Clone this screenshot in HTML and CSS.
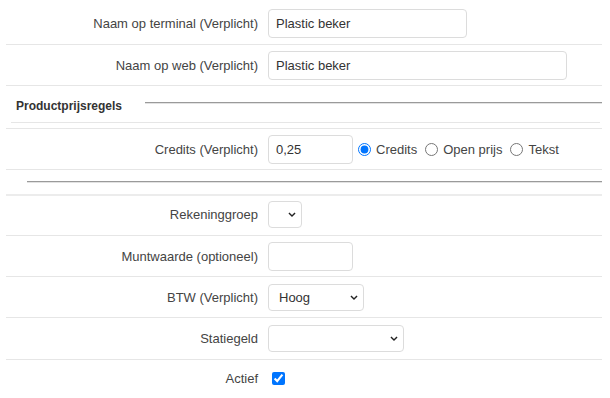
FILE: index.html
```html
<!DOCTYPE html>
<html lang="nl">
<head>
  <meta charset="UTF-8" />
  <meta name="viewport" content="width=device-width, initial-scale=1.0" />
  <title>Product bewerken</title>
  <link rel="stylesheet" href="styles.css">
</head>
<body>

  <div class="form">
    <!-- Namen -->
    <div class="row first">
      <label class="label">Naam op terminal (Verplicht)</label>
      <div class="field"><input class="text w-terminal" type="text" value="Plastic beker" /></div>
    </div>
    <div class="row">
      <label class="label">Naam op web (Verplicht)</label>
      <div class="field"><input class="text w-web" type="text" value="Plastic beker" /></div>
    </div>

    <!-- Prijsregels -->
    <div class="section">
      <div class="section-head">
        <span>Productprijsregels</span>
        <hr />
      </div>
    </div>
    <div class="row">
      <label class="label">Credits (Verplicht)</label>
      <div class="field">
        <input class="text w-small" type="text" value="0,25" />
        <div class="options">
          <label class="option"><input type="radio" name="prijs" checked /> Credits</label>
          <label class="option"><input type="radio" name="prijs" /> Open prijs</label>
          <label class="option"><input type="radio" name="prijs" /> Tekst</label>
        </div>
      </div>
    </div>
    <div class="divider"><hr /></div>

    <!-- Overig -->
    <div class="row thick">
      <label class="label">Rekeninggroep</label>
      <div class="field">
        <span class="select-wrap">
          <select class="select w-tiny"><option></option></select>
          <svg class="chevron" viewBox="0 0 10 6"><path d="M1.2 1.2l3.8 3.6 3.8-3.6" /></svg>
        </span>
      </div>
    </div>
    <div class="row">
      <label class="label">Muntwaarde (optioneel)</label>
      <div class="field"><input class="text w-small" type="text" /></div>
    </div>
    <div class="row">
      <label class="label">BTW (Verplicht)</label>
      <div class="field">
        <span class="select-wrap">
          <select class="select w-btw"><option>Hoog</option><option>Laag</option><option>Geen</option></select>
          <svg class="chevron" viewBox="0 0 10 6"><path d="M1.2 1.2l3.8 3.6 3.8-3.6" /></svg>
        </span>
      </div>
    </div>
    <div class="row tall">
      <label class="label">Statiegeld</label>
      <div class="field">
        <span class="select-wrap">
          <select class="select w-statie"><option></option></select>
          <svg class="chevron" viewBox="0 0 10 6"><path d="M1.2 1.2l3.8 3.6 3.8-3.6" /></svg>
        </span>
      </div>
    </div>
    <div class="row last">
      <label class="label">Actief</label>
      <div class="field"><input class="check" type="checkbox" checked /></div>
    </div>
  </div>

</body>
</html>
```

FILE: styles.css
```css
* {
  box-sizing: border-box;
}

body {
  font-family: "Liberation Sans", Arial, sans-serif;
  font-size: 13px;
  margin: 0;
  padding: 3px 8px 0 6px;
  background-color: white;
  color: #444;
}

.row {
  display: flex;
  align-items: center;
  height: 41px;
  border-top: 1px solid #e6e6e6;
}

.row.first {
  border-top: none;
}

.row.tall {
  height: 42px;
}

.row.thick {
  border-top: 2px solid #ececec;
  padding-bottom: 3px;
}

.row.last {
  height: 37px;
}

.label {
  width: 262px;
  flex-shrink: 0;
  text-align: right;
  padding-right: 10px;
}

.field {
  display: flex;
  align-items: center;
}

.text {
  height: 29px;
  padding: 0 7px;
  border: 1px solid #dcdcdc;
  border-radius: 4px;
  font-family: inherit;
  font-size: 13px;
  color: #333;
  background-color: white;
}

.w-terminal {
  width: 199px;
}

.w-web {
  width: 299px;
}

.w-small {
  width: 85px;
}

/* Prijsregels */
.section {
  border-top: 1px solid #e6e6e6;
  padding-bottom: 5px;
}

.section-head {
  display: flex;
  align-items: center;
  height: 37px;
  margin: 0 2px 0 5px;
  padding: 4px 0 0 5px;
  border-bottom: 1px solid #e6e6e6;
  font-size: 12px;
  font-weight: bold;
  color: #333;
}

.section-head hr {
  flex: 1;
  margin: 0 -2px 6px 23px;
}

hr {
  height: 0;
  border: none;
  border-top: 1px solid #9a9a9a;
  border-bottom: 1px solid #e2e2e2;
}

.divider {
  height: 25px;
  border-top: 1px solid #e6e6e6;
  padding-top: 11px;
}

.divider hr {
  margin: 0 0 0 21px;
}

.options {
  display: flex;
  align-items: center;
  gap: 8px;
  margin-left: 5px;
}

.option {
  display: flex;
  align-items: center;
  gap: 5px;
  color: #444;
}

.option input {
  width: 13px;
  height: 13px;
  margin: 0;
}

/* Selects */
.select-wrap {
  position: relative;
  display: inline-block;
}

.select {
  appearance: none;
  -webkit-appearance: none;
  height: 27px;
  padding: 0 22px 0 10px;
  border: 1px solid #dcdcdc;
  border-radius: 4px;
  background-color: white;
  font-family: inherit;
  font-size: 13px;
  color: #333;
  display: block;
}

.w-tiny {
  width: 33px;
}

.w-btw {
  width: 96px;
}

.w-statie {
  width: 136px;
}

.chevron {
  position: absolute;
  right: 6px;
  top: 11px;
  width: 8px;
  height: 5px;
  pointer-events: none;
}

.chevron path {
  fill: none;
  stroke: #222;
  stroke-width: 1.8;
}

.check {
  width: 13px;
  height: 13px;
  margin: 0 0 0 4px;
}
```
